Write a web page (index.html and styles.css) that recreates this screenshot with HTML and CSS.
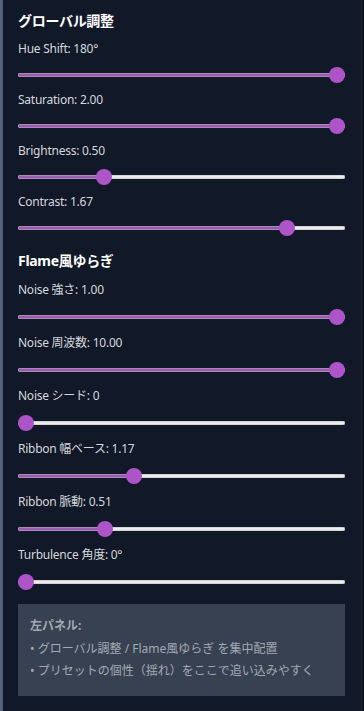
FILE: index.html
```html
<!DOCTYPE html>
<html lang="ja">
<head>
<meta charset="utf-8">
<link rel="stylesheet" href="styles.css">
</head>
<body>
<aside class="panel">
  <h2 class="section-title">グローバル調整</h2>
  <div class="control">
    <label class="label">Hue Shift: 180°</label>
    <input class="range" type="range" min="0" max="100" value="100" style="--v:1">
  </div>
  <div class="control">
    <label class="label">Saturation: 2.00</label>
    <input class="range" type="range" min="0" max="100" value="100" style="--v:1">
  </div>
  <div class="control">
    <label class="label">Brightness: 0.50</label>
    <input class="range" type="range" min="0" max="100" value="25" style="--v:0.25">
  </div>
  <div class="control">
    <label class="label">Contrast: 1.67</label>
    <input class="range" type="range" min="0" max="1000" value="838" style="--v:0.838">
  </div>

  <h2 class="section-title section-gap">Flame風ゆらぎ</h2>
  <div class="control tall">
    <label class="label">Noise 強さ: 1.00</label>
    <input class="range" type="range" min="0" max="100" value="100" style="--v:1">
  </div>
  <div class="control tall">
    <label class="label">Noise 周波数: 10.00</label>
    <input class="range" type="range" min="0" max="100" value="100" style="--v:1">
  </div>
  <div class="control tall">
    <label class="label">Noise シード: 0</label>
    <input class="range" type="range" min="0" max="100" value="0" style="--v:0">
  </div>
  <div class="control tall">
    <label class="label">Ribbon 幅ベース: 1.17</label>
    <input class="range" type="range" min="0" max="1000" value="348" style="--v:0.348">
  </div>
  <div class="control tall">
    <label class="label">Ribbon 脈動: 0.51</label>
    <input class="range" type="range" min="0" max="1000" value="255" style="--v:0.255">
  </div>
  <div class="control tall">
    <label class="label">Turbulence 角度: 0°</label>
    <input class="range" type="range" min="0" max="100" value="0" style="--v:0">
  </div>

  <div class="note">
    <p class="note-title">左パネル:</p>
    <p class="note-line">• グローバル調整 / Flame風ゆらぎ を集中配置</p>
    <p class="note-line">• プリセットの個性（揺れ）をここで追い込みやすく</p>
  </div>
</aside>
</body>
</html>
```
FILE: styles.css
```css
* { box-sizing: border-box; }

html, body {
  margin: 0;
  height: 100%;
}

body {
  background: linear-gradient(90deg, #55677e 0, #4a5c74 3px, #0e1320 3px);
  font-family: "Noto Sans", "Noto Sans CJK JP", sans-serif;
  overflow: hidden;
}

.panel {
  margin-left: 3px;
  width: 359px;
  height: 711px;
  background: #111827;
  border-right: 1px solid #1c2433;
  padding: 11px 16px 0 15px;
  display: flex;
  flex-direction: column;
}

.section-title {
  margin: 0 0 10px;
  height: 20px;
  font-size: 14px;
  line-height: 20px;
  font-weight: 700;
  color: #ffffff;
  letter-spacing: -0.3px;
}

.section-gap {
  margin-top: 6px;
  margin-bottom: 10px;
}

.control {
  display: flex;
  flex-direction: column;
  gap: 10px;
  margin-bottom: 9px;
}

.label {
  font-size: 12px;
  line-height: 16px;
  height: 16px;
  color: #d4d7dd;
  letter-spacing: -0.25px;
}

.control.tall .label {
  line-height: 18px;
  height: 18px;
}

.range {
  -webkit-appearance: none;
  appearance: none;
  display: block;
  width: 100%;
  height: 16px;
  margin: 0;
  background: transparent;
}

.range::-webkit-slider-runnable-track {
  height: 4px;
  border-radius: 2px;
  background: linear-gradient(90deg,
    #9b59b6 calc(8px + (100% - 16px) * var(--v)),
    #ececec calc(8px + (100% - 16px) * var(--v)));
  box-shadow: inset 0 0 0 0.6px #b9b9b9;
}

.range::-webkit-slider-thumb {
  -webkit-appearance: none;
  appearance: none;
  width: 16px;
  height: 16px;
  margin-top: -6px;
  border-radius: 50%;
  background: #ad55c8;
  border: none;
}

.note {
  margin-top: 5px;
  background: #374151;
  padding: 12px 12px 14px;
  color: #a3a9b3;
  font-size: 12px;
}

.note p { margin: 0; }

.note-title {
  font-weight: 700;
  line-height: 20px;
  margin-bottom: 2px !important;
}

.note-line {
  line-height: 22px;
}
```
